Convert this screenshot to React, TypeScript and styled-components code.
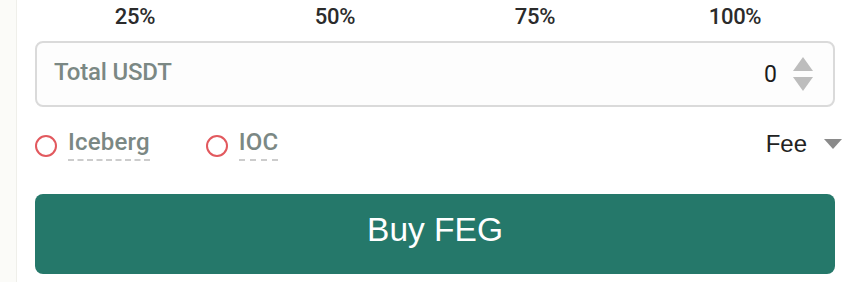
import React from "react";
import styled, { createGlobalStyle } from "styled-components";

const Global = createGlobalStyle`
  html, body { margin: 0; padding: 0; background: #ffffff; }
  body { width: 855px; height: 282px; overflow: hidden; }
  * { box-sizing: border-box; }
`;

const Page = styled.div`
  display: flex;
  width: 855px;
  height: 282px;
  overflow: hidden;
`;

const SideStrip = styled.div`
  width: 17px;
  flex: none;
  background: #fbfbf8;
  border-right: 1px solid #efefea;
`;

const Main = styled.div`
  flex: 1;
  display: flex;
  flex-direction: column;
  padding: 0 20px 0 18px;
  background: #ffffff;
`;

const Percents = styled.div`
  display: grid;
  grid-template-columns: repeat(4, 1fr);
  height: 41px;
  align-items: start;
  padding-top: 3px;
`;

const Percent = styled.div`
  text-align: center;
  font-family: Roboto, "Liberation Sans", sans-serif;
  font-weight: 500;
  font-size: 22px;
  line-height: 28px;
  color: #2b2b2b;
  letter-spacing: -0.3px;
`;

const InputBox = styled.div`
  height: 66px;
  border: 2px solid #dadada;
  border-radius: 8px;
  background: #fdfdfd;
  display: flex;
  align-items: center;
  padding: 0 20px 0 17px;
`;

const Label = styled.div`
  flex: 1;
  font-family: Roboto, "Liberation Sans", sans-serif;
  font-weight: 500;
  font-size: 24px;
  color: #7b8884;
  letter-spacing: -0.2px;
  margin-top: -4px;
`;

const Value = styled.div`
  font-family: Roboto, "Liberation Sans", sans-serif;
  font-size: 23px;
  color: #1c1c1c;
  margin-right: 16px;
`;

const Spinner = styled.div`
  display: flex;
  flex-direction: column;
  gap: 6px;
  align-items: center;
`;

const Arrow = styled.div<{ $up?: boolean }>`
  width: 0;
  height: 0;
  border-left: 10px solid transparent;
  border-right: 10px solid transparent;
  ${(p) =>
    p.$up
      ? "border-bottom: 14px solid #bdbdbd;"
      : "border-top: 14px solid #bdbdbd;"}
`;

const OptionsRow = styled.div`
  display: flex;
  align-items: center;
  height: 87px;
  padding-bottom: 12px;
`;

const Option = styled.label`
  display: flex;
  align-items: center;
  gap: 11px;
  margin-right: 56px;
`;

const Radio = styled.span`
  width: 22px;
  height: 22px;
  border: 2px solid #e2595e;
  border-radius: 50%;
  display: inline-block;
  margin-top: 3px;
`;

const OptionText = styled.span`
  font-family: Roboto, "Liberation Sans", sans-serif;
  font-weight: 500;
  font-size: 24px;
  line-height: 28px;
  color: #7b8884;
  padding-bottom: 3px;
  border-bottom: 2px dashed #cccccc;
  letter-spacing: 0.2px;
`;

const Spacer = styled.div`
  flex: 1;
`;

const Fee = styled.div`
  display: flex;
  align-items: center;
  gap: 17px;
  font-family: "Liberation Sans", Arial, sans-serif;
  font-size: 24px;
  color: #222222;
  margin-right: -7px;
  margin-top: -2px;
`;

const Caret = styled.span`
  width: 0;
  height: 0;
  border-left: 9px solid transparent;
  border-right: 9px solid transparent;
  border-top: 10px solid #8a8a8a;
`;

const BuyButton = styled.button`
  height: 80px;
  border: none;
  border-radius: 8px;
  background: #25786a;
  color: #ffffff;
  font-family: "Liberation Sans", Arial, sans-serif;
  font-size: 33.5px;
  cursor: pointer;
  padding: 0 0 8px;
`;

export default function App() {
  return (
    <Page>
      <Global />
      <SideStrip />
      <Main>
        <Percents>
          <Percent>25%</Percent>
          <Percent>50%</Percent>
          <Percent>75%</Percent>
          <Percent>100%</Percent>
        </Percents>
        <InputBox>
          <Label>Total USDT</Label>
          <Value>0</Value>
          <Spinner>
            <Arrow $up />
            <Arrow />
          </Spinner>
        </InputBox>
        <OptionsRow>
          <Option>
            <Radio />
            <OptionText>Iceberg</OptionText>
          </Option>
          <Option>
            <Radio />
            <OptionText>IOC</OptionText>
          </Option>
          <Spacer />
          <Fee>
            Fee
            <Caret />
          </Fee>
        </OptionsRow>
        <BuyButton>Buy FEG</BuyButton>
      </Main>
    </Page>
  );
}
